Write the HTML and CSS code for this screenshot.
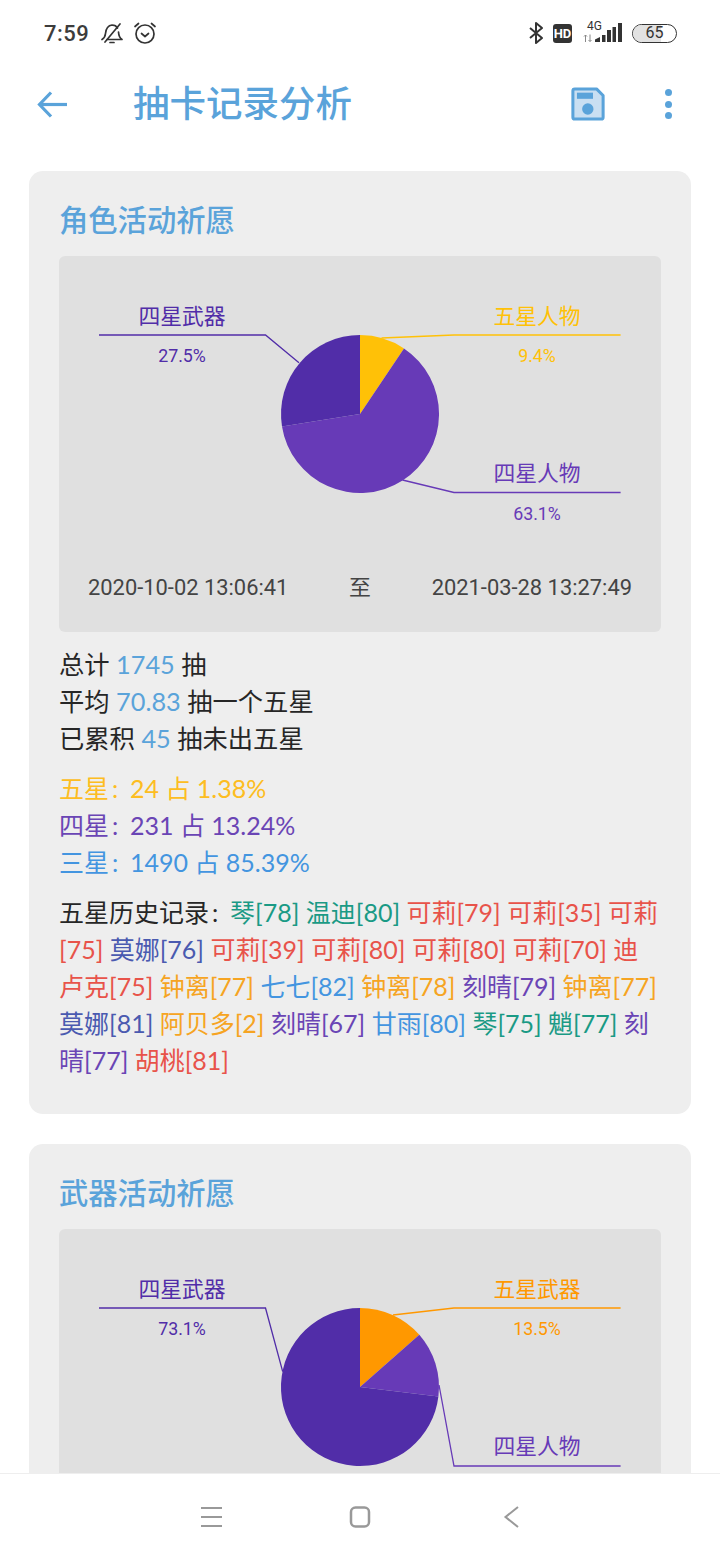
FILE: index.html
```html
<!DOCTYPE html>
<html lang="zh-CN">
<head>
    <meta charset="UTF-8">
    <meta name="viewport" content="width=device-width, initial-scale=1.0">
    <title>抽卡记录分析</title>
    <link rel="stylesheet" href="styles.css">
</head>
<body>
    <div class="page">
        <div class="status-bar">
            <div class="status-left">
                <span class="time">7:59</span>
                <svg class="bell" width="24" height="24" viewBox="0 0 24 24" fill="none" stroke="#333" stroke-width="1.7" stroke-linecap="round" stroke-linejoin="round">
                    <path d="M2 18.500c2.500-1.500 3.200-3 3.500-6 .4-4 1.500-8 6.500-8.500 2.500 0 4.500 1 5.500 3"/>
                    <path d="M18.500 11c.2 3.500 1 5.800 3.500 7.500H7"/>
                    <path d="M20 3 5 21"/>
                    <path d="M10 21.500h4"/>
                </svg>
                <svg class="alarm" width="24" height="24" viewBox="0 0 24 24" fill="none" stroke="#333" stroke-width="1.700" stroke-linecap="round" stroke-linejoin="round">
                    <circle cx="12" cy="13" r="9"/>
                    <path d="m8.500 12.500 3.500 3 3.500-3"/>
                    <path d="M2 5.500 5.500 2.500"/>
                    <path d="M22 5.500 18.500 2.500"/>
                </svg>
            </div>
            <div class="status-right">
                <svg width="16" height="24" viewBox="0 0 16 24" fill="none" stroke="#333" stroke-width="2" stroke-linejoin="round">
                    <path d="M2 7l12 10-6 5V2l6 5L2 17"/>
                </svg>
                <span class="hd">HD</span>
                <div class="signal">
                    <span class="net">4G</span>
                    <svg width="40" height="21" viewBox="0 0 40 21">
                        <path d="M3.500 19v-7M2 13.500l1.500-1.500 1.500 1.500M8 11.500v7M6.500 17l1.500 1.500 1.500-1.500" fill="none" stroke="#888" stroke-width="1"/>
                        <path d="M13 19v-2.500l5-2.500v5zM20 19v-7h3.500v7zM25 19V7h4v12zM30.500 19V4H34v15zM36 19V0h4v19z" fill="#333"/>
                    </svg>
                </div>
                <div class="battery"><span class="battery-fill"></span><span class="battery-num">65</span></div>
            </div>
        </div>

        <div class="app-bar">
            <svg class="back" width="32" height="32" viewBox="0 0 32 32" fill="none" stroke="#5aa3da" stroke-width="3.200">
                <path d="M31 16.500H4"/>
                <path d="M15 4.500 3.500 16.500 15 28.500"/>
            </svg>
            <h1 class="page-title">抽卡记录分析</h1>
            <svg class="save" width="34" height="34" viewBox="0 0 36 36">
                <path d="M4 2h23l7 7v23a2 2 0 0 1-2 2H4a2 2 0 0 1-2-2V4a2 2 0 0 1 2-2z" fill="#c9dff2" stroke="#5aa3da" stroke-width="3.200" stroke-linejoin="round"/>
                <rect x="6.300" y="6" width="17" height="6.500" fill="#5aa3da"/>
                <circle cx="17.800" cy="23.300" r="6" fill="#5aa3da"/>
            </svg>
            <div class="dots"><i></i><i></i><i></i></div>
        </div>

        <div class="card">
            <h2 class="card-title">角色活动祈愿</h2>
            <div class="chart">
                <svg class="pie" width="602" height="300" viewBox="0 0 602 300">
                    <polyline class="leader" points="240,106.700 206.500,79 40,79" stroke="#512da8"/>
                    <polyline class="leader" points="322.500,82 395,79 561.600,79" stroke="#ffc107"/>
                    <polyline class="leader" points="343.500,224 395,236.500 561.600,236.500" stroke="#673ab7"/>
                    <path d="M301 158V79A79 79 0 0 1 345 92.400z" fill="#ffc107"/>
                    <path d="M301 158 345 92.400A79 79 0 1 1 223 170.400z" fill="#673ab7"/>
                    <path d="M301 158 223 170.400A79 79 0 0 1 301 79z" fill="#512da8"/>
                    <text class="label" x="123" y="68" fill="#512da8">四星武器</text>
                    <text class="pct" x="123" y="106" fill="#512da8">27.5%</text>
                    <text class="label" x="478" y="68" fill="#ffc107">五星人物</text>
                    <text class="pct" x="478" y="106" fill="#ffc107">9.4%</text>
                    <text class="label" x="478" y="225" fill="#673ab7">四星人物</text>
                    <text class="pct" x="478" y="263.500" fill="#673ab7">63.1%</text>
                </svg>
                <div class="date-row">
                    <span>2020-10-02 13:06:41</span>
                    <span>至</span>
                    <span>2021-03-28 13:27:49</span>
                </div>
            </div>

            <div class="block stats">
                <div>总计 <span class="num">1745</span> 抽</div>
                <div>平均 <span class="num">70.83</span> 抽一个五星</div>
                <div>已累积 <span class="num">45</span> 抽未出五星</div>
            </div>
            <div class="block">
                <div class="c-gold">五星<span class="colon">:</span>24 占 1.38%</div>
                <div class="c-violet">四星<span class="colon">:</span>231 占 13.24%</div>
                <div class="c-blue">三星<span class="colon">:</span>1490 占 85.39%</div>
            </div>
            <div class="block">五星历史记录<span class="colon">:</span><span class="c-green">琴[78]</span> <span class="c-green">温迪[80]</span> <span class="c-red">可莉[79]</span> <span class="c-red">可莉[35]</span> <span class="c-red">可莉[75]</span> <span class="c-indigo">莫娜[76]</span> <span class="c-red">可莉[39]</span> <span class="c-red">可莉[80]</span> <span class="c-red">可莉[80]</span> <span class="c-red">可莉[70]</span> <span class="c-red">迪卢克[75]</span> <span class="c-orange">钟离[77]</span> <span class="c-blue">七七[82]</span> <span class="c-orange">钟离[78]</span> <span class="c-violet">刻晴[79]</span> <span class="c-orange">钟离[77]</span> <span class="c-indigo">莫娜[81]</span> <span class="c-orange">阿贝多[2]</span> <span class="c-violet">刻晴[67]</span> <span class="c-blue">甘雨[80]</span> <span class="c-green">琴[75]</span> <span class="c-green">魈[77]</span> <span class="c-violet">刻晴[77]</span> <span class="c-red">胡桃[81]</span></div>
        </div>

        <div class="card">
            <h2 class="card-title">武器活动祈愿</h2>
            <div class="chart">
                <svg class="pie" width="602" height="300" viewBox="0 0 602 300">
                    <polyline class="leader" points="223.700,142.700 206.500,79 40,79" stroke="#512da8"/>
                    <polyline class="leader" points="334,86 395,79 561.600,79" stroke="#ff9800"/>
                    <polyline class="leader" points="380,156 395,237 561.600,237" stroke="#673ab7"/>
                    <path d="M301 158V79A79 79 0 0 1 360.300 105.800z" fill="#ff9800"/>
                    <path d="M301 158 360.300 105.800A79 79 0 0 1 379.400 167.400z" fill="#673ab7"/>
                    <path d="M301 158 379.400 167.400A79 79 0 1 1 301 79z" fill="#512da8"/>
                    <text class="label" x="123" y="68" fill="#512da8">四星武器</text>
                    <text class="pct" x="123" y="106" fill="#512da8">73.1%</text>
                    <text class="label" x="478" y="68" fill="#ff9800">五星武器</text>
                    <text class="pct" x="478" y="106" fill="#ff9800">13.5%</text>
                    <text class="label" x="478" y="225" fill="#673ab7">四星人物</text>
                </svg>
            </div>
        </div>

        <div class="nav-bar">
            <svg width="24" height="24" viewBox="0 0 24 24" fill="none" stroke="#999" stroke-width="2">
                <path d="M3 3h21M3 12h21M3 21h21"/>
            </svg>
            <svg width="24" height="24" viewBox="0 0 24 24" fill="none" stroke="#999" stroke-width="2.500">
                <rect x="3" y="2.500" width="18" height="19" rx="4.500"/>
            </svg>
            <svg width="24" height="24" viewBox="0 0 24 24" fill="none" stroke="#999" stroke-width="2">
                <path d="M20 2 7.500 12 20 22"/>
            </svg>
        </div>
    </div>
</body>
</html>
```

FILE: styles.css
```css
* {
    box-sizing: border-box;
}
body {
    margin: 0;
    background: white;
    font-family: Lato, "Noto Sans CJK SC", sans-serif;
}
.page {
    position: relative;
    width: 720px;
    height: 1560px;
    overflow: hidden;
    padding: 0 29px;
}
.status-bar {
    height: 66px;
    margin: 0 14px 0 15px;
    display: flex;
    justify-content: space-between;
    align-items: center;
    color: #333;
}
.status-left {
    display: flex;
    align-items: center;
}
.time {
    font-family: Roboto, sans-serif;
    font-size: 22px;
    font-weight: 500;
    letter-spacing: 0.5px;
    margin-right: 11px;
    color: #3c3c3c;
}
.bell {
    margin-right: 9px;
}
.status-right {
    display: flex;
    align-items: center;
}
.hd {
    width: 19px;
    height: 19px;
    margin-left: 9px;
    background: #333;
    border-radius: 3px;
    color: white;
    font-family: Roboto, sans-serif;
    font-size: 13px;
    font-weight: 700;
    line-height: 19px;
    text-align: center;
}
.signal {
    position: relative;
    width: 40px;
    height: 24px;
    margin-left: 10px;
}
.signal svg {
    position: absolute;
    left: 0;
    top: 2px;
}
.net {
    position: absolute;
    left: 5px;
    top: -1px;
    font-family: Roboto, sans-serif;
    font-size: 12px;
    line-height: 12px;
}
.battery {
    position: relative;
    width: 45px;
    height: 19px;
    margin-left: 10px;
    border: 1.500px solid #333;
    border-radius: 10px;
    overflow: hidden;
}
.battery-fill {
    position: absolute;
    left: 0;
    top: 0;
    bottom: 0;
    width: 65%;
    background: #e2e2e2;
}
.battery-num {
    position: relative;
    display: block;
    font-family: Roboto, sans-serif;
    font-size: 16px;
    line-height: 16px;
    text-align: center;
}
.app-bar {
    height: 76px;
    margin: 0 -29px 29px;
    padding-left: 36px;
    display: flex;
    align-items: center;
}
.page-title {
    margin: 0 0 2px 65px;
    width: 438px;
    color: #5aa3da;
    font-size: 36.500px;
    font-weight: 500;
    line-height: 48px;
}
.dots {
    margin-left: 60px;
    display: flex;
    flex-direction: column;
    gap: 4.300px;
}
.dots i {
    width: 7px;
    height: 7px;
    border-radius: 50%;
    background: #5aa3da;
}
.card {
    margin-bottom: 30px;
    padding: 30px 30px 34px;
    background: #eeeeee;
    border-radius: 14px;
}
.card-title {
    margin: 0 0 17px;
    color: #5aa3da;
    font-size: 29.300px;
    font-weight: 500;
    line-height: 38px;
}
.chart {
    height: 376px;
    margin-bottom: 14px;
    background: #e0e0e0;
    border-radius: 6px;
    overflow: hidden;
}
.pie {
    display: block;
}
.leader {
    fill: none;
    stroke-width: 1.300;
}
.label {
    font-family: Roboto, "Noto Sans CJK SC", sans-serif;
    font-size: 21.800px;
    text-anchor: middle;
}
.pct {
    font-family: Roboto, sans-serif;
    font-size: 17.800px;
    text-anchor: middle;
}
.date-row {
    margin-top: 18px;
    padding: 0 29px;
    display: flex;
    justify-content: space-between;
    color: #444;
    font-family: Roboto, "Noto Sans CJK SC", sans-serif;
    font-size: 21.900px;
    line-height: 28px;
}
.block {
    margin-bottom: 13px;
    color: #262626;
    font-size: 25px;
    line-height: 37px;
}
.stats {
    font-size: 25.300px;
}
.block:last-child {
    margin-bottom: 0;
    padding-bottom: 1px;
}
.num {
    color: #5aa3da;
}
.colon {
    display: inline-block;
    width: 21px;
    padding-left: 3px;
}
.c-gold {
    color: #fdbd21;
}
.c-violet {
    color: #6a45b5;
}
.c-blue {
    color: #4395e0;
}
.c-green {
    color: #1a9a85;
}
.c-red {
    color: #e8534a;
}
.c-indigo {
    color: #4a5ab0;
}
.c-orange {
    color: #f6a422;
}
.nav-bar {
    position: absolute;
    left: 0;
    right: 0;
    bottom: 0;
    height: 87px;
    background: white;
    border-top: 1px solid #eeeeee;
    display: flex;
    justify-content: center;
    align-items: center;
    gap: 126px;
}
```
